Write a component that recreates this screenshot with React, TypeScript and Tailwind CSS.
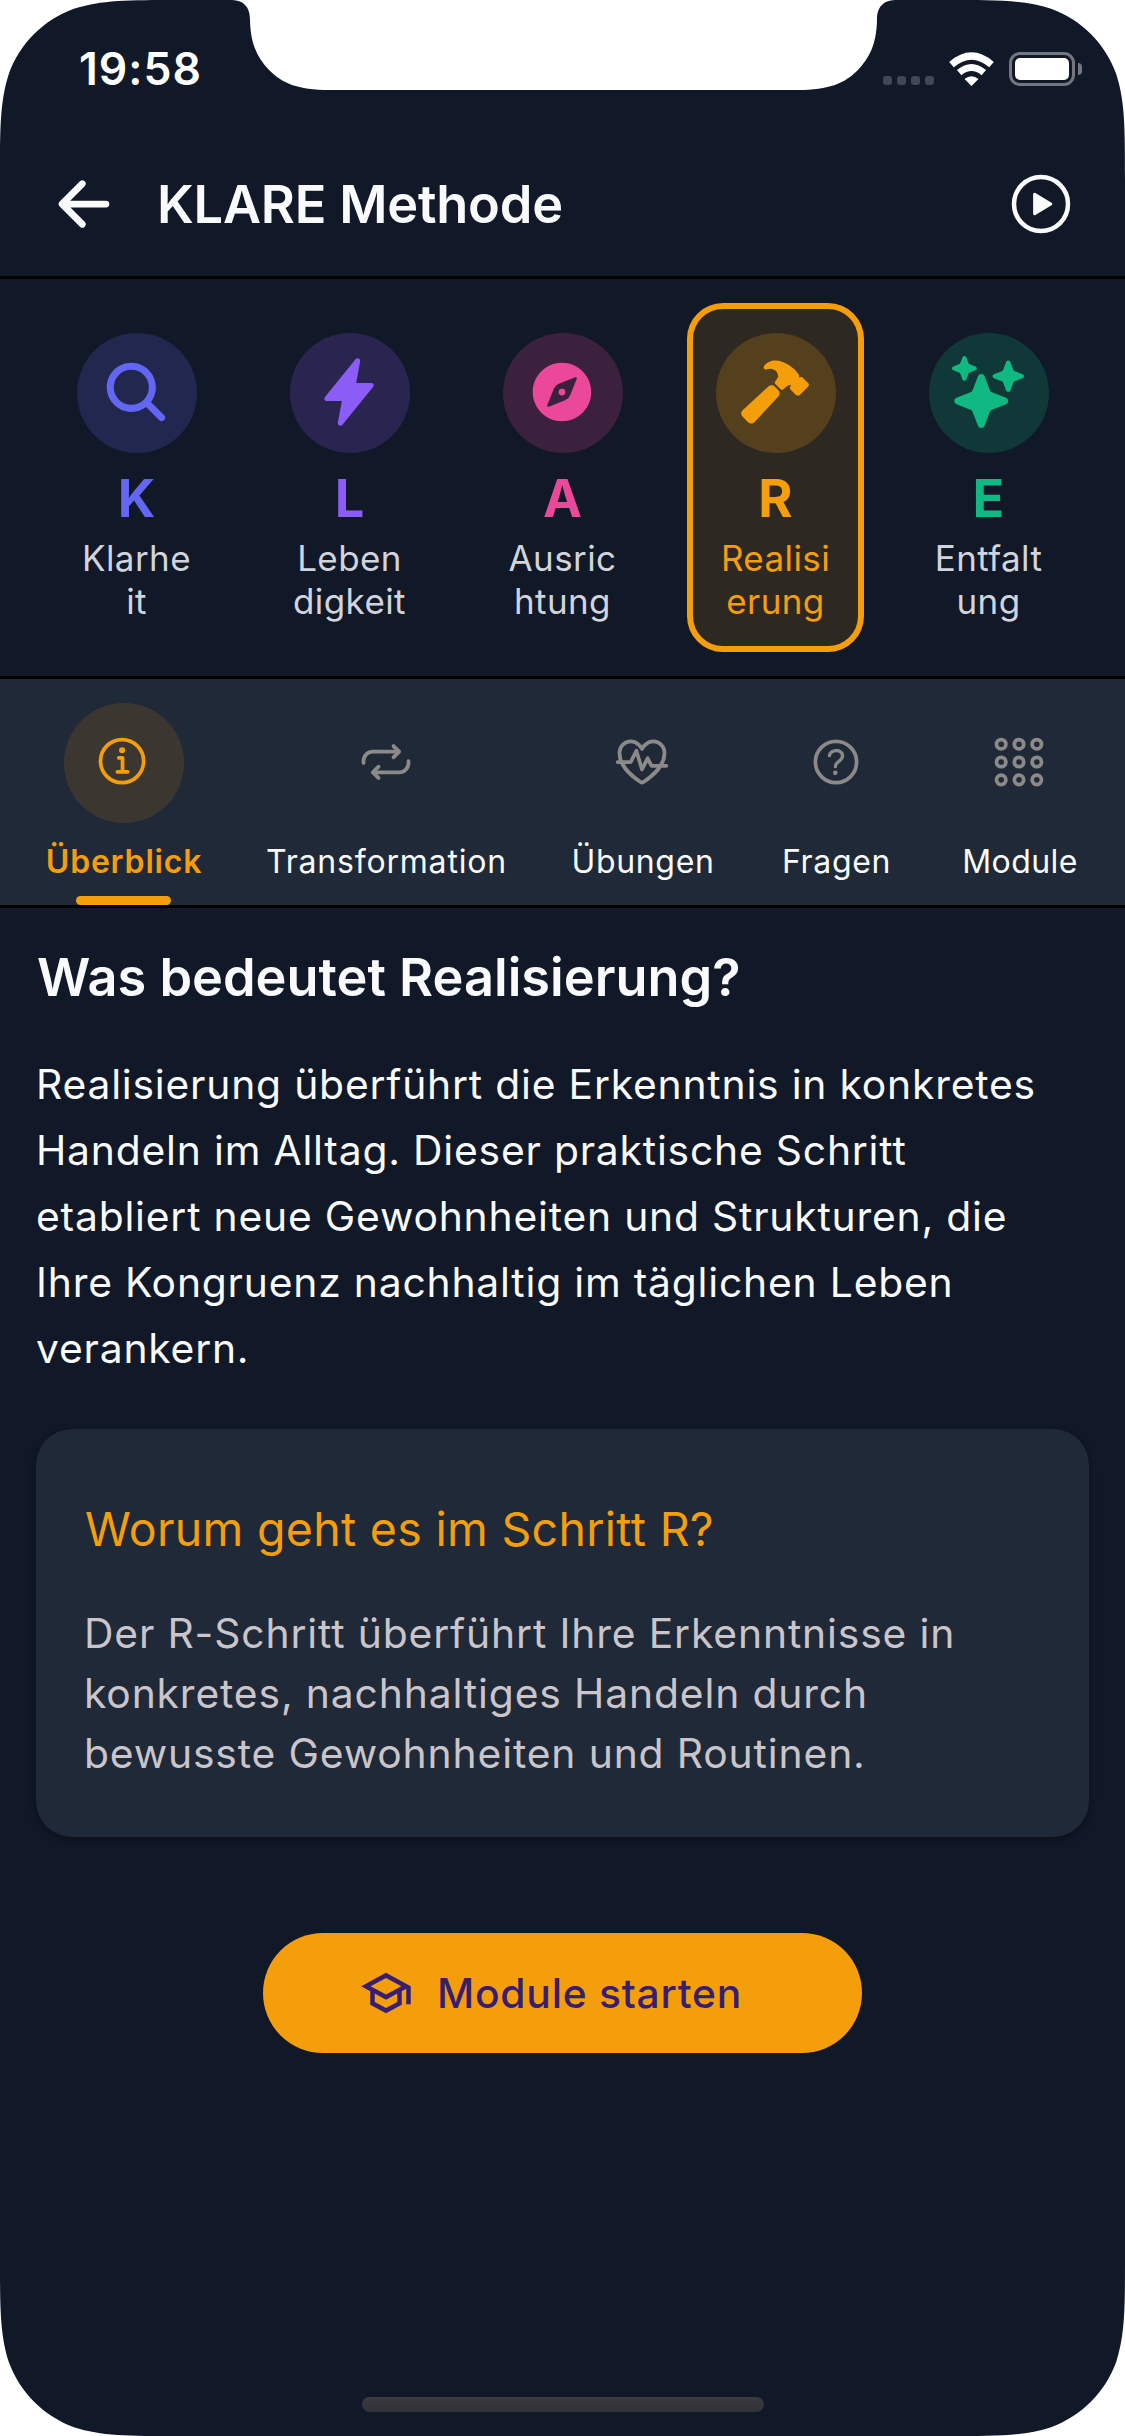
import type { IconType } from "react-icons";
import {
  IoAppsOutline,
  IoArrowBack,
  IoCompass,
  IoFitnessOutline,
  IoFlash,
  IoHammer,
  IoHelpCircleOutline,
  IoInformationCircleOutline,
  IoPlayCircleOutline,
  IoRepeatOutline,
  IoSearch,
  IoSparkles,
} from "react-icons/io5";
import { MdOutlineSchool } from "react-icons/md";

type Step = {
  letter: string;
  lines: [string, string];
  Icon: IconType;
  color: string;
  circle: string;
  active?: boolean;
};

const steps: Step[] = [
  { letter: "K", lines: ["Klarhe", "it"], Icon: IoSearch, color: "text-[#6366f1]", circle: "bg-[#6366f1]/20" },
  { letter: "L", lines: ["Leben", "digkeit"], Icon: IoFlash, color: "text-[#8b5cf6]", circle: "bg-[#8b5cf6]/20" },
  { letter: "A", lines: ["Ausric", "htung"], Icon: IoCompass, color: "text-[#ec4899]", circle: "bg-[#ec4899]/20" },
  { letter: "R", lines: ["Realisi", "erung"], Icon: IoHammer, color: "text-[#f59e0b]", circle: "bg-[#f59e0b]/20", active: true },
  { letter: "E", lines: ["Entfalt", "ung"], Icon: IoSparkles, color: "text-[#10b981]", circle: "bg-[#10b981]/20" },
];

type Tab = { label: string; Icon: IconType; width: string; spacing: string; active?: boolean };

const tabs: Tab[] = [
  { label: "Überblick", Icon: IoInformationCircleOutline, width: "w-[220px]", spacing: "tracking-[0.8px]", active: true },
  { label: "Transformation", Icon: IoRepeatOutline, width: "w-[305px]", spacing: "tracking-[0.8px]" },
  { label: "Übungen", Icon: IoFitnessOutline, width: "w-[208px]", spacing: "tracking-[0.66px]" },
  { label: "Fragen", Icon: IoHelpCircleOutline, width: "w-[179px]", spacing: "tracking-[0.66px]" },
  { label: "Module", Icon: IoAppsOutline, width: "w-[188px]", spacing: "tracking-[0.4px]" },
];

const CORNER =
  "M0 0H178.9C127.4 0 101.6 0 73.9 8.8C43.6 19.8 19.8 43.6 8.8 73.9C0 101.6 0 127.4 0 178.9Z";

function ScreenCorner({ className }: { className: string }) {
  return (
    <svg className={`absolute h-[180px] w-[180px] fill-white ${className}`} viewBox="0 0 180 180">
      <path d={CORNER} />
    </svg>
  );
}

function Bezel() {
  return (
    <div className="pointer-events-none absolute inset-0">
      <ScreenCorner className="top-0 left-0" />
      <ScreenCorner className="top-0 right-0 -scale-x-100" />
      <ScreenCorner className="bottom-0 left-0 -scale-y-100" />
      <ScreenCorner className="right-0 bottom-0 -scale-100" />
      <svg className="absolute top-0 left-[225px] h-[90px] w-[677px] fill-white" viewBox="0 0 677 90">
        <path d="M5 0C17 0 25 5 25 20C25.500 45 33 58 44 70C57 83 72 90 105 90H572C605 90 620 83 633 70C644 58 651.500 45 652 20C652 5 660 0 672 0Z" />
      </svg>
    </div>
  );
}

function WifiIcon() {
  return (
    <svg className="h-[35px] w-[47px]" viewBox="0 0 47 35" fill="none">
      <path d="M3.500 12.600Q23.500 -4.600 43.500 12.600" stroke="white" strokeWidth="7" />
      <path d="M11.200 20.600Q23.500 10.400 35.800 20.600" stroke="white" strokeWidth="7" />
      <path d="M16.500 27Q23.500 21.400 30.500 27L23.500 34Z" fill="white" />
    </svg>
  );
}

function StatusBar() {
  return (
    <div className="flex h-[132px] items-start justify-between pr-[43px] pl-[79px]">
      <div className="mt-[39px] text-[44.500px] leading-[60px] font-semibold tracking-[1px]">19:58</div>
      <div className="mt-[52px] flex">
        <div className="mt-[24px] flex gap-[5px]">
          <span className="h-[9px] w-[9px] rounded-[3px] bg-[#434754]" />
          <span className="h-[9px] w-[9px] rounded-[3px] bg-[#434754]" />
          <span className="h-[9px] w-[9px] rounded-[3px] bg-[#434754]" />
          <span className="h-[9px] w-[9px] rounded-[3px] bg-[#434754]" />
        </div>
        <div className="ml-[14px]">
          <WifiIcon />
        </div>
        <div className="ml-[14px] h-[34px] w-[66px] rounded-[11px] border-[3px] border-[#747781] p-[3px]">
          <div className="h-full w-full rounded-[5px] bg-white" />
        </div>
        <div className="mt-[11px] ml-[3px] h-[12px] w-[4px] rounded-r-[4px] bg-[#747781]" />
      </div>
    </div>
  );
}

function Header() {
  return (
    <header className="flex h-[147px] items-center border-b-[3px] border-black px-[48px] text-[#f9fafb]">
      <IoArrowBack className="h-[72px] w-[72px]" />
      <h1 className="ml-[37px] text-[52.300px] leading-[72px] font-semibold tracking-[-0.200px]">KLARE Methode</h1>
      <IoPlayCircleOutline className="ml-auto h-[72px] w-[72px]" />
    </header>
  );
}

function StepCard({ letter, lines, Icon, color, circle, active }: Step) {
  return (
    <div
      className={`flex flex-1 flex-col items-center rounded-[36px] border-[6px] pt-[24px] ${
        active ? "border-[#f59e0b] bg-[#f59e0b]/[0.13]" : "border-transparent"
      }`}
    >
      <div className={`flex h-[120px] w-[120px] items-center justify-center rounded-full ${circle} ${color}`}>
        <Icon className="mr-[1px] mb-[2px] h-[72px] w-[72px]" />
      </div>
      <div className={`mt-[15px] text-[52.300px] leading-[60px] font-bold ${color}`}>{letter}</div>
      <div
        className={`mt-[9px] text-center text-[35px] leading-[43px] tracking-[0.400px] ${active ? color : "text-[#d1d5db]"}`}
      >
        {lines[0]}
        <br />
        {lines[1]}
      </div>
    </div>
  );
}

function TabItem({ label, Icon, width, spacing, active }: Tab) {
  return (
    <div
      className={`relative flex flex-col items-center pt-[24px] ${width} ${active ? "text-[#f59e0b]" : "text-[#8c8a89]"}`}
    >
      <div
        className={`flex h-[120px] w-[120px] items-center justify-center rounded-full ${active ? "bg-[#f59e0b]/[0.13]" : ""}`}
      >
        <Icon className="mr-[2px] mb-[2px] h-[60px] w-[60px]" />
      </div>
      <div
        className={`mt-[18px] text-[32px] leading-[42px] whitespace-nowrap ${spacing} ${
          active ? "font-semibold" : "text-[#f9fafb]"
        }`}
      >
        {label}
      </div>
      {active && <div className="absolute bottom-0 left-[62px] h-[9px] w-[95px] rounded-[4.500px] bg-[#f59e0b]" />}
    </div>
  );
}

export default function App() {
  return (
    <div className="relative flex h-[2436px] w-[1125px] flex-col overflow-hidden bg-[#111827] font-['Inter',sans-serif] text-white">
      <Bezel />
      <StatusBar />
      <Header />

      <section className="flex h-[400px] gap-[36px] border-b-[3px] border-black px-[48px] py-[24px]">
        {steps.map((step) => (
          <StepCard key={step.letter} {...step} />
        ))}
      </section>

      <nav className="flex h-[229px] border-b-[3px] border-black bg-[#1f2937] pl-[14px]">
        {tabs.map((tab) => (
          <TabItem key={tab.label} {...tab} />
        ))}
      </nav>

      <main className="flex flex-col px-[36px] pt-[36px]">
        <h2 className="pl-[1px] text-[52.300px] leading-[66px] font-semibold text-[#f9fafb]">Was bedeutet Realisierung?</h2>
        <p className="mt-[41px] text-[40.800px] leading-[66px] tracking-[0.800px] whitespace-nowrap text-[#f9fafb]">
          Realisierung überführt die Erkenntnis in konkretes
          <br />
          Handeln im Alltag. Dieser praktische Schritt
          <br />
          etabliert neue Gewohnheiten und Strukturen, die
          <br />
          Ihre Kongruenz nachhaltig im täglichen Leben
          <br />
          verankern.
        </p>

        <div className="mt-[48px] h-[408px] rounded-[36px] bg-[#1f2937] pt-[70px] pl-[48px] shadow-[0_3px_9px_rgba(0,0,0,0.35)]">
          <h3 className="pl-[1px] text-[46.500px] leading-[60px] tracking-[0.300px] text-[#f59e0b]">
            Worum geht es im Schritt R?
          </h3>
          <p className="mt-[44px] text-[40.800px] leading-[60px] tracking-[0.860px] whitespace-nowrap text-[#cac5ca]">
            Der R-Schritt überführt Ihre Erkenntnisse in
            <br />
            konkretes, nachhaltiges Handeln durch
            <br />
            bewusste Gewohnheiten und Routinen.
          </p>
        </div>

        <button className="mt-[96px] ml-[227px] flex h-[120px] w-[599px] items-center rounded-full bg-[#f59e0b] pl-[96px] text-[#381e72]">
          <MdOutlineSchool className="h-[54px] w-[54px]" />
          <span className="ml-[24px] text-[40.800px] leading-[60px] font-medium tracking-[0.750px]">Module starten</span>
        </button>
      </main>

      <div className="mt-auto mb-[24px] h-[15px] w-[402px] self-center rounded-full bg-linear-to-b from-[#3c3b3f] to-[#2f3238]" />
    </div>
  );
}
